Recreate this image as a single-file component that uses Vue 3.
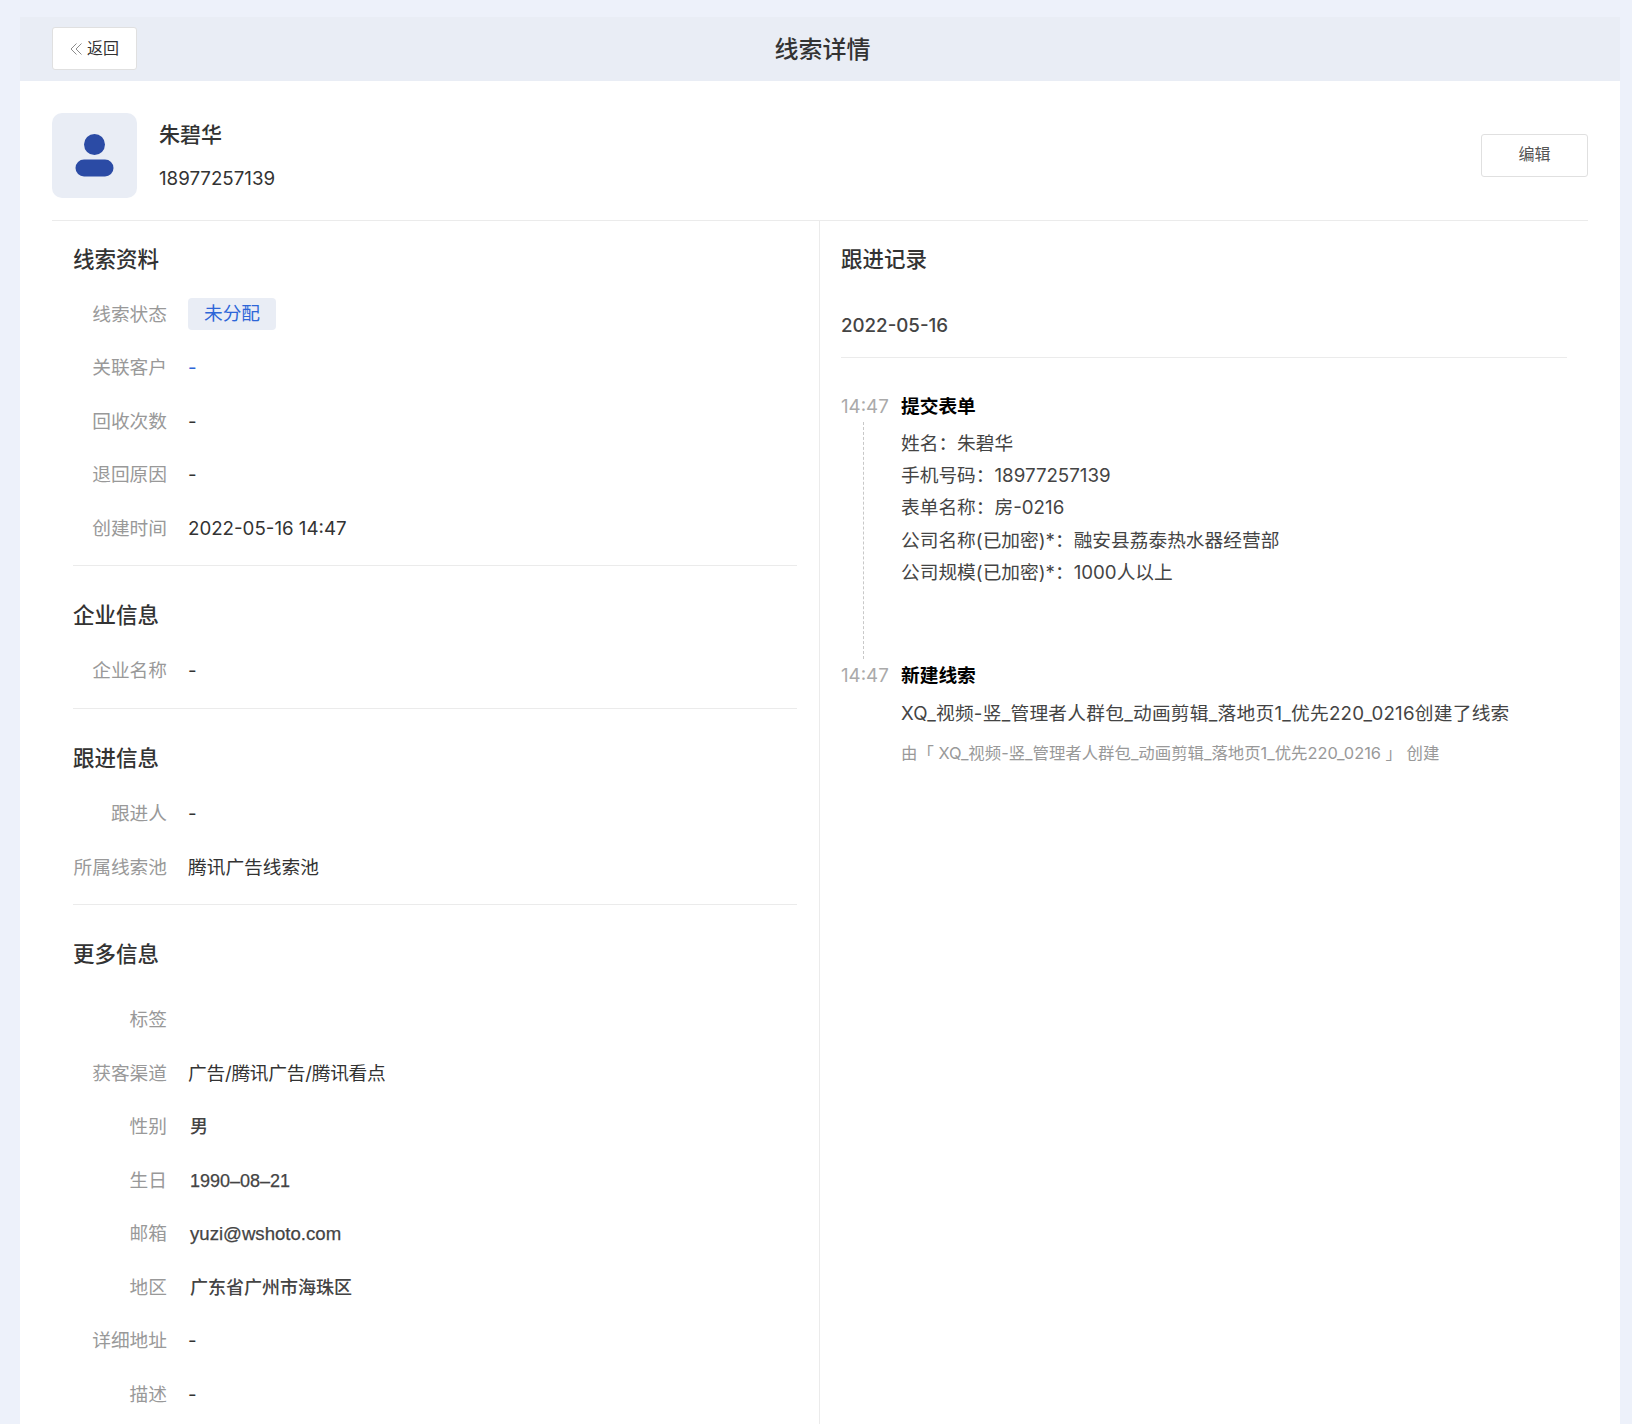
<script setup>
const sections = [
  { title: '线索资料', first: true, rows: [
    { label: '线索状态', tag: '未分配' },
    { label: '关联客户', value: '-', link: true },
    { label: '回收次数', value: '-' },
    { label: '退回原因', value: '-' },
    { label: '创建时间', value: '2022-05-16 14:47' },
  ]},
  { title: '企业信息', rows: [{ label: '企业名称', value: '-' }] },
  { title: '跟进信息', rows: [
    { label: '跟进人', value: '-' },
    { label: '所属线索池', value: '腾讯广告线索池' },
  ]},
  { title: '更多信息', more: true, rows: [
    { label: '标签', value: '' },
    { label: '获客渠道', value: '广告/腾讯广告/腾讯看点', narrow: true },
    { label: '性别', value: '男', inset: true },
    { label: '生日', value: '1990\u201308\u201321', inset: true, latin: true },
    { label: '邮箱', value: 'yuzi@wshoto.com', inset: true, email: true, latin: true },
    { label: '地区', value: '广东省广州市海珠区', inset: true },
    { label: '详细地址', value: '-' },
    { label: '描述', value: '-' },
  ]},
]
const formLines = [
  '姓名\uFF1A朱碧华',
  '手机号码\uFF1A18977257139',
  '表单名称\uFF1A房-0216',
  '公司名称(已加密)*\uFF1A融安县荔泰热水器经营部',
  '公司规模(已加密)*\uFF1A1000人以上',
]
</script>

<template>
  <div class="page">
    <div class="shell">
      <header class="topbar">
        <button class="btn back">
          <svg width="14" height="14" viewBox="0 0 14 14" fill="none" stroke="#8c8c8c" stroke-width="1">
            <path d="M6.5 1.5 1 7l5.500 5.500M11.500 1.500 6 7l5.500 5.500" />
          </svg>
          <span>返回</span>
        </button>
        <h1 class="page-title">线索详情</h1>
      </header>
      <div class="body">
        <section class="profile">
          <div class="avatar">
            <svg width="39" height="43" viewBox="0 0 39 43" fill="#2b4ba5">
              <circle cx="19.500" cy="10.500" r="10.500" />
              <rect x="0.500" y="25.500" width="38" height="17" rx="8.500" />
            </svg>
          </div>
          <div class="who">
            <div class="name">朱碧华</div>
            <div class="phone">18977257139</div>
          </div>
          <button class="btn edit">编辑</button>
        </section>
        <div class="columns">
          <div class="left">
            <section v-for="s in sections" :key="s.title" class="info" :class="{ more: s.more, first: s.first }">
              <h2 class="heading">{{ s.title }}</h2>
              <div class="rows">
                <div v-for="r in s.rows" :key="r.label" class="row">
                  <span class="label">{{ r.label }}</span>
                  <span v-if="r.tag" class="tag">{{ r.tag }}</span>
                  <span v-else class="value" :class="{ link: r.link, inset: r.inset, email: r.email, latin: r.latin, narrow: r.narrow }">{{ r.value }}</span>
                </div>
              </div>
            </section>
          </div>
          <div class="right">
            <h2 class="heading">跟进记录</h2>
            <div class="date">2022-05-16</div>
            <div class="event first">
              <span class="time">14:47</span>
              <div class="event-body">
                <div class="event-title">提交表单</div>
                <div v-for="l in formLines" :key="l" class="line">{{ l }}</div>
              </div>
            </div>
            <div class="event second">
              <span class="time">14:47</span>
              <div class="event-body">
                <div class="event-title">新建线索</div>
                <div class="line wide">XQ_视频-竖_管理者人群包_动画剪辑_落地页1_优先220_0216创建了线索</div>
                <div class="note">由「 XQ_视频-竖_管理者人群包_动画剪辑_落地页1_优先220_0216 」 创建</div>
              </div>
            </div>
          </div>
        </div>
      </div>
    </div>
  </div>
</template>

<style>
html, body { margin: 0; height: 1424px; overflow: hidden; background: #edf1fa; }
</style>

<style scoped>
.page {
  height: 1424px;
  box-sizing: border-box;
  padding: 17px 12px 0 20px;
  font-family: Inter, "Noto Sans CJK SC", sans-serif;
  color: #333;
  overflow: hidden;
}
.shell { background: #fff; height: 100%; }
.topbar {
  position: relative;
  height: 64px;
  background: #e9edf5;
  display: flex;
  align-items: center;
  padding-left: 32px;
}
.page-title {
  margin: 0;
  position: absolute;
  left: 5px;
  right: 0;
  top: 16px;
  text-align: center;
  font-size: 24px;
  font-weight: 500;
  line-height: 34px;
  color: #333;
}
.btn {
  box-sizing: border-box;
  background: #fff;
  border: 1px solid #e0e0e0;
  border-radius: 3px;
  font: inherit;
  font-size: 16px;
  color: #555;
  display: flex;
  align-items: center;
  justify-content: center;
  height: 43px;
  padding: 0;
}
.back { width: 85px; gap: 3px; margin-top: -1px; color: #333; padding-bottom: 4px; }
.back svg { margin-top: 4px; }
.edit { width: 107px; margin-left: auto; padding-bottom: 6px; }
.body { padding: 32px 32px 0; }
.profile {
  display: flex;
  align-items: center;
  padding-bottom: 22px;
  border-bottom: 1px solid #ebebeb;
}
.avatar {
  width: 85px;
  height: 85px;
  border-radius: 10px;
  background: #e9edf5;
  display: flex;
  align-items: center;
  justify-content: center;
}
.who { margin-left: 22px; }
.name { font-size: 21px; font-weight: 500; line-height: 30px; color: #333; }
.phone { font-size: 18.720px; line-height: 26px; margin-top: 16px; color: #333; }
.columns { display: flex; height: 1300px; }
.left {
  width: 768px;
  box-sizing: border-box;
  border-right: 1px solid #ebebeb;
  padding: 0 22px 0 21px;
}
.right { flex: 1; padding: 0 21px 0 21px; }
.info { border-bottom: 1px solid #ebebeb; padding-bottom: 9.500px; }
.info.first { padding-bottom: 9px; }
.info:nth-child(2) { padding-bottom: 10.500px; }
.info.more { border-bottom: 0; padding-bottom: 0; }
.heading {
  margin: 0;
  padding-top: 23px;
  font-size: 21.500px;
  line-height: 30px;
  font-weight: 500;
  color: #333;
}
.info .heading { padding-top: 34px; margin-bottom: 14.500px; }
.info.first .heading { padding-top: 23px; margin-bottom: 14px; }
.info.more .heading { margin-bottom: 24.500px; }
.row {
  display: flex;
  align-items: center;
  height: 53.500px;
  font-size: 18.720px;
}
.label { width: 94px; white-space: nowrap; text-align: right; color: #999; flex: none; line-height: 26px; }
.value { margin-left: 21px; color: #333; line-height: 26px; }
.value.narrow { letter-spacing: -0.250px; }
.value.inset {
  margin-left: 23px;
  font-family: "Liberation Sans", "Noto Sans CJK SC", sans-serif;
  font-size: 18px;
  font-weight: 500;
  color: #444;
}
.value.latin { -webkit-text-stroke: 0.250px #444; }
.value.email { font-size: 18.600px; }
.value.link { color: #2e66d8; }
.tag {
  margin-left: 21px;
  width: 88px;
  height: 32px;
  line-height: 32px;
  text-align: center;
  background: #e9edf5;
  border-radius: 4px;
  color: #2e66d8;
  margin-top: -1px;
}
.date {
  margin-top: 39px;
  padding-bottom: 18px;
  border-bottom: 1px solid #ebebeb;
  font-size: 18.720px;
  font-weight: 500;
  line-height: 26px;
  color: #444;
}
.event { display: flex; position: relative; }
.event.first { margin-top: 36px; height: 269px; }
.event.first::before {
  content: "";
  position: absolute;
  left: 22px;
  top: 28px;
  height: 237px;
  border-left: 1px dashed #c8c8c8;
}
.time { width: 60px; flex: none; font-size: 18.720px; line-height: 26px; color: #aaa; }
.event-title { font-size: 18.720px; line-height: 26px; font-weight: 600; color: #000; margin-bottom: 8px; }
.second .event-title { margin-bottom: 9px; }
.line { font-size: 18.720px; line-height: 32.200px; color: #444; }
.line.wide { letter-spacing: 0.250px; }
.note { font-size: 16.400px; line-height: 24px; color: #999; margin-top: 11px; }
</style>
